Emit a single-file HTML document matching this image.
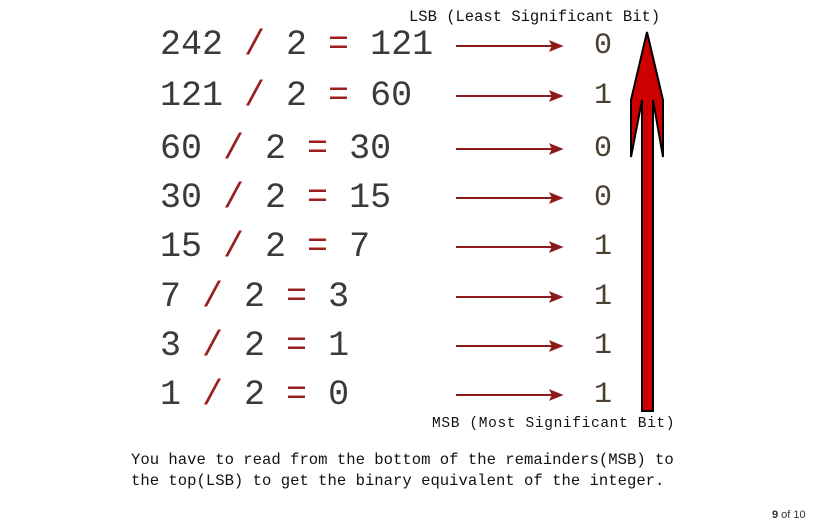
<!DOCTYPE html>
<html><head><style>
body{margin:0;width:819px;height:527px;background:#fff;position:relative;overflow:hidden;font-family:"Liberation Mono",monospace}
.r{position:absolute;left:160px;font-size:35px;line-height:35px;color:#3a3a3a;white-space:pre}
.r b{font-weight:normal;color:#9a2020}
.d{position:absolute;left:594px;font-size:30px;line-height:30px;color:#4a4030}
.s{position:absolute;font-size:15.6px;color:#111;white-space:pre}
</style></head><body>
<div class="s" style="left:409px;top:8px;font-size:15.5px">LSB (Least Significant Bit)</div>
<div class="r" style="top:28px">242 <b>/</b> 2 <b>=</b> 121</div>
<div class="r" style="top:79px">121 <b>/</b> 2 <b>=</b> 60</div>
<div class="r" style="top:132px">60 <b>/</b> 2 <b>=</b> 30</div>
<div class="r" style="top:181px">30 <b>/</b> 2 <b>=</b> 15</div>
<div class="r" style="top:230px">15 <b>/</b> 2 <b>=</b> 7</div>
<div class="r" style="top:280px">7 <b>/</b> 2 <b>=</b> 3</div>
<div class="r" style="top:329px">3 <b>/</b> 2 <b>=</b> 1</div>
<div class="r" style="top:378px">1 <b>/</b> 2 <b>=</b> 0</div>
<div class="d" style="top:31px">0</div>
<div class="d" style="top:81px">1</div>
<div class="d" style="top:134px">0</div>
<div class="d" style="top:183px">0</div>
<div class="d" style="top:232px">1</div>
<div class="d" style="top:282px">1</div>
<div class="d" style="top:331px">1</div>
<div class="d" style="top:380px">1</div>
<svg width="819" height="527" style="position:absolute;left:0;top:0">
<g stroke="#8b1a1a" stroke-width="2" fill="#8b1a1a">
<line x1="456" y1="46" x2="555" y2="46"/><path d="M561 46 L551 42 L553 46 L551 50Z"/>
<line x1="456" y1="96" x2="555" y2="96"/><path d="M561 96 L551 92 L553 96 L551 100Z"/>
<line x1="456" y1="149" x2="555" y2="149"/><path d="M561 149 L551 145 L553 149 L551 153Z"/>
<line x1="456" y1="198" x2="555" y2="198"/><path d="M561 198 L551 194 L553 198 L551 202Z"/>
<line x1="456" y1="247" x2="555" y2="247"/><path d="M561 247 L551 243 L553 247 L551 251Z"/>
<line x1="456" y1="297" x2="555" y2="297"/><path d="M561 297 L551 293 L553 297 L551 301Z"/>
<line x1="456" y1="346" x2="555" y2="346"/><path d="M561 346 L551 342 L553 346 L551 350Z"/>
<line x1="456" y1="395" x2="555" y2="395"/><path d="M561 395 L551 391 L553 395 L551 399Z"/>
</g>
<path d="M647 32 L663 100 L663 157 L653 100 L653 411 L642 411 L642 100 L631 157 L631 100 Z" fill="#cc0000" stroke="#000" stroke-width="2" stroke-linejoin="miter"/>
</svg>
<div class="s" style="left:432px;top:416px;font-size:14.5px;letter-spacing:0.65px">MSB (Most Significant Bit)</div>
<div class="s" style="left:131px;top:450px;line-height:21px">You have to read from the bottom of the remainders(MSB) to
the top(LSB) to get the binary equivalent of the integer.</div>
<div style="position:absolute;left:772px;top:509px;font-family:'Liberation Sans',sans-serif;font-size:11px;color:#333"><b>9</b> of 10</div>
</body></html>
